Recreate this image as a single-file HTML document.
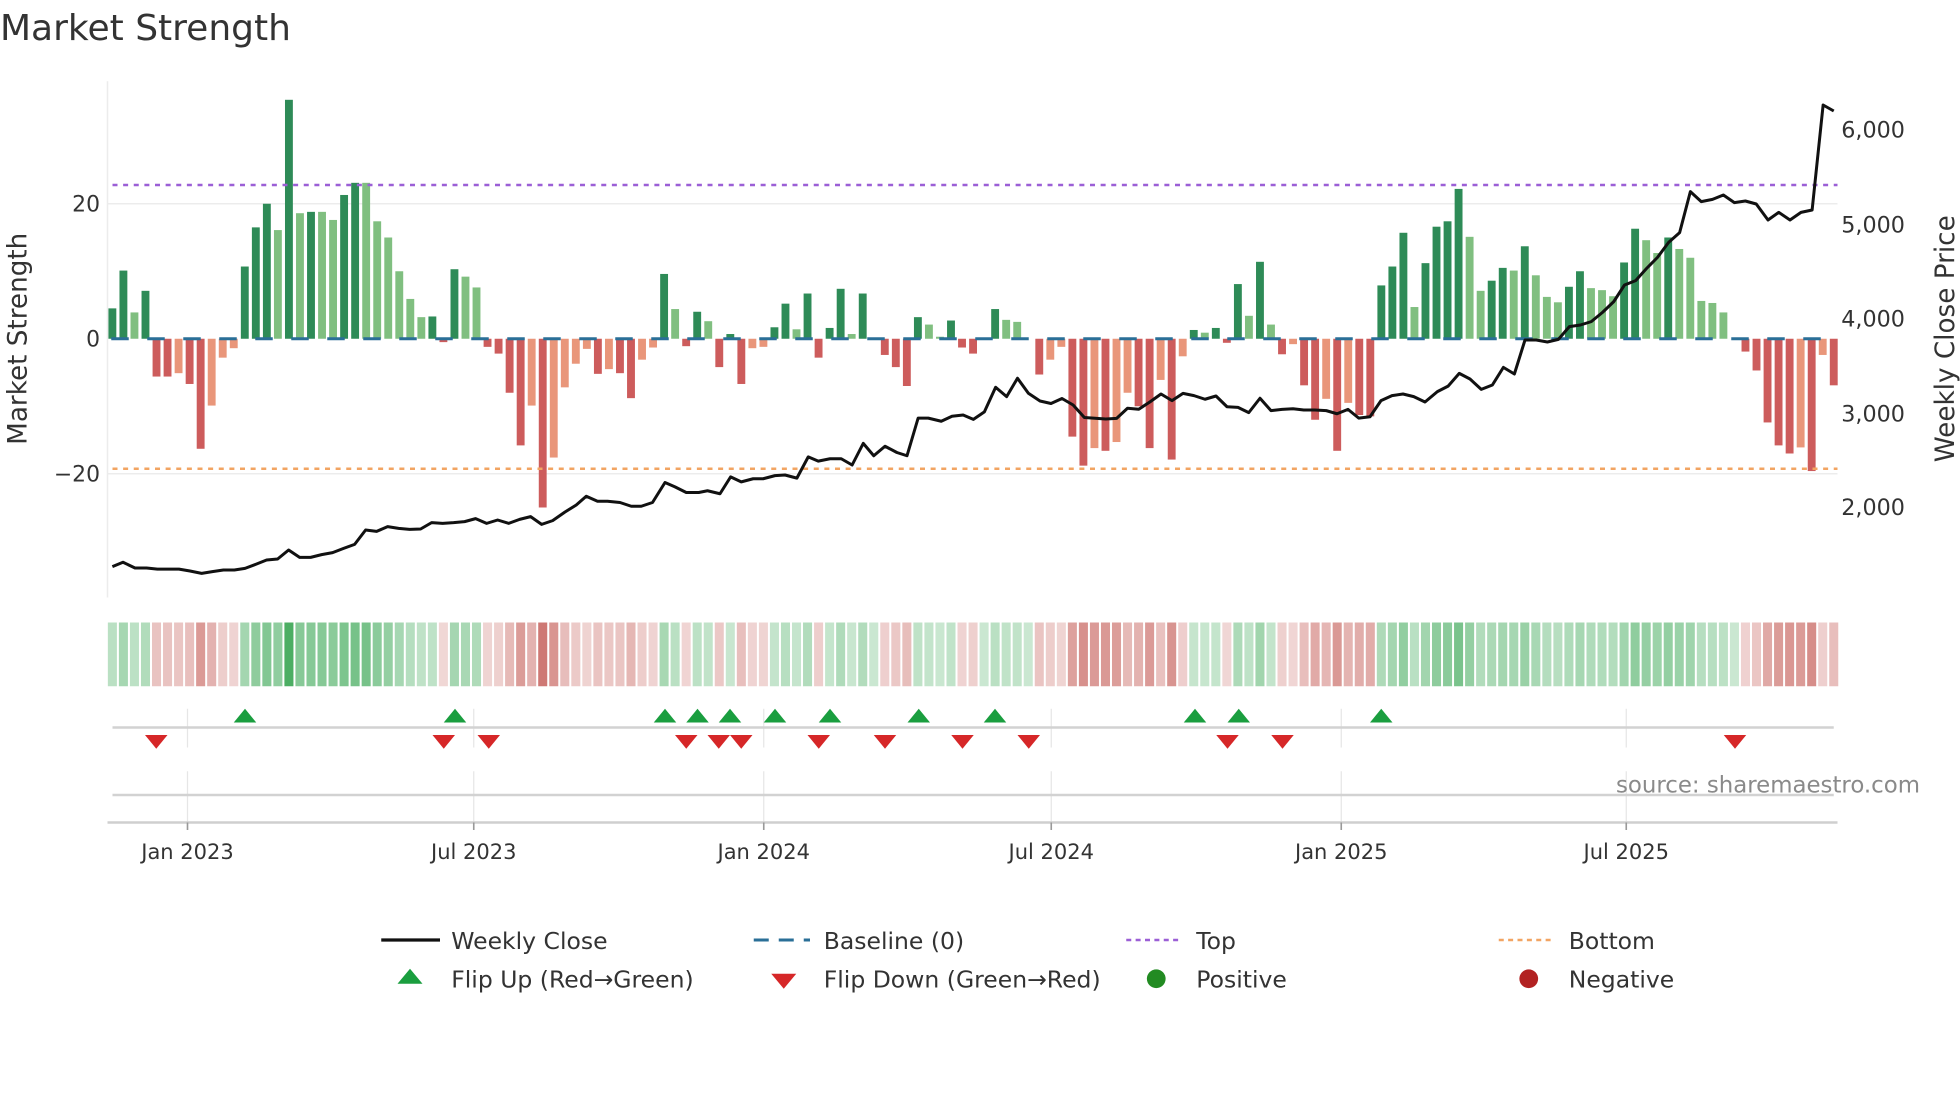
<!DOCTYPE html>
<html><head><meta charset="utf-8"><style>
html,body{margin:0;padding:0;background:#fff;width:1960px;height:1102px;overflow:hidden}
svg{display:block}
text{font-family:"DejaVu Sans","Liberation Sans",sans-serif;fill:#333}
</style></head><body>
<svg id="s" width="1960" height="1102" viewBox="0 0 1568 881.6" xmlns="http://www.w3.org/2000/svg">
<text x="0" y="32" font-size="28.8">Market Strength</text>
<g stroke="#ececec" stroke-width="1.2">
<line x1="86" y1="163" x2="1470" y2="163"/>
<line x1="86" y1="379" x2="1470" y2="379"/>
<line x1="86" y1="65" x2="86" y2="478"/>
</g>
<g id="bars"></g>
<line x1="90" y1="148" x2="1470" y2="148" stroke="#9b5fd6" stroke-width="2" stroke-dasharray="4,4.5"/>
<line x1="90" y1="375" x2="1470" y2="375" stroke="#f2a462" stroke-width="2" stroke-dasharray="4,4.5"/>
<line x1="89" y1="271" x2="1470" y2="271" stroke="#2a6f97" stroke-width="2.4" stroke-dasharray="14,14.8"/>
<polyline id="price" fill="none" stroke="#111" stroke-width="2.4" stroke-linejoin="round"/>
<g font-size="17.5" text-anchor="end">
<text x="80" y="169">20</text><text x="80" y="277">0</text><text x="80" y="385">−20</text>
</g>
<g font-size="17.8">
<text x="1473" y="110">6,000</text><text x="1473" y="186">5,000</text><text x="1473" y="261">4,000</text><text x="1473" y="337">3,000</text><text x="1473" y="412">2,000</text>
</g>
<text transform="translate(21,271) rotate(-90)" font-size="21" text-anchor="middle">Market Strength</text>
<text transform="translate(1563,271) rotate(-90)" font-size="21" text-anchor="middle">Weekly Close Price</text>
<g id="heat"></g>
<g stroke="#e6e6e6" stroke-width="1">
<line x1="150" y1="567" x2="150" y2="598"/><line x1="379" y1="567" x2="379" y2="598"/><line x1="611" y1="567" x2="611" y2="598"/><line x1="841" y1="567" x2="841" y2="598"/><line x1="1073" y1="567" x2="1073" y2="598"/><line x1="1301" y1="567" x2="1301" y2="598"/>
<line x1="150" y1="617" x2="150" y2="658"/><line x1="379" y1="617" x2="379" y2="658"/><line x1="611" y1="617" x2="611" y2="658"/><line x1="841" y1="617" x2="841" y2="658"/><line x1="1073" y1="617" x2="1073" y2="658"/><line x1="1301" y1="617" x2="1301" y2="658"/>
</g>
<line x1="90" y1="582" x2="1467" y2="582" stroke="#d2d2d2" stroke-width="2"/>
<line x1="90" y1="636" x2="1467" y2="636" stroke="#d2d2d2" stroke-width="2"/>
<line x1="86" y1="658" x2="1470" y2="658" stroke="#cfcfcf" stroke-width="2"/>
<g stroke="#999" stroke-width="1.3">
<line x1="150" y1="658" x2="150" y2="664"/><line x1="379" y1="658" x2="379" y2="664"/><line x1="611" y1="658" x2="611" y2="664"/><line x1="841" y1="658" x2="841" y2="664"/><line x1="1073" y1="658" x2="1073" y2="664"/><line x1="1301" y1="658" x2="1301" y2="664"/>
</g>
<g id="flips"></g>
<g font-size="16.8" text-anchor="middle">
<text x="150" y="687">Jan 2023</text><text x="379" y="687">Jul 2023</text><text x="611" y="687">Jan 2024</text><text x="841" y="687">Jul 2024</text><text x="1073" y="687">Jan 2025</text><text x="1301" y="687">Jul 2025</text>
</g>
<text x="1536" y="634" font-size="18.3" text-anchor="end" style="fill:#8a8a8a">source: sharemaestro.com</text>
<g font-size="18.8">
<line x1="305" y1="752" x2="352" y2="752" stroke="#111" stroke-width="2.6"/>
<text x="361" y="759">Weekly Close</text>
<line x1="603" y1="752" x2="648" y2="752" stroke="#2a6f97" stroke-width="2.4" stroke-dasharray="12,8"/>
<text x="659" y="759">Baseline (0)</text>
<line x1="901" y1="752" x2="946" y2="752" stroke="#9b5fd6" stroke-width="2" stroke-dasharray="4,3.5"/>
<text x="957" y="759">Top</text>
<line x1="1199" y1="752" x2="1244" y2="752" stroke="#f2a462" stroke-width="2" stroke-dasharray="4,3.5"/>
<text x="1255" y="759">Bottom</text>
<polygon points="328,775 338,787 318,787" fill="#1a9e3f"/>
<text x="361" y="790">Flip Up (Red→Green)</text>
<polygon points="617,779 637,779 627,791" fill="#d62728"/>
<text x="659" y="790">Flip Down (Green→Red)</text>
<circle cx="925" cy="783" r="7.5" fill="#228b22"/>
<text x="957" y="790">Positive</text>
<circle cx="1223" cy="783" r="7.5" fill="#b22222"/>
<text x="1255" y="790">Negative</text>
</g>
</svg>
<script>
var NS="http://www.w3.org/2000/svg";
var D=[[4.5,'D'],[10.1,'D'],[3.9,'L'],[7.1,'D'],[-5.6,'R'],[-5.6,'R'],[-5.1,'O'],[-6.7,'R'],[-16.3,'R'],[-9.9,'O'],[-2.8,'O'],[-1.4,'O'],[10.7,'D'],[16.5,'D'],[20,'D'],[16.1,'L'],[35.4,'D'],[18.6,'L'],[18.8,'D'],[18.8,'L'],[17.6,'L'],[21.3,'D'],[23.1,'D'],[23.1,'L'],[17.4,'L'],[15,'L'],[10,'L'],[5.9,'L'],[3.2,'L'],[3.3,'D'],[-0.5,'R'],[10.3,'D'],[9.2,'L'],[7.6,'L'],[-1.2,'R'],[-2.2,'R'],[-8,'R'],[-15.8,'R'],[-9.9,'O'],[-25,'R'],
[-17.6,'O'],[-7.2,'O'],[-3.7,'O'],[-1.5,'O'],[-5.2,'R'],[-4.5,'O'],[-5.1,'R'],[-8.8,'R'],[-3.1,'O'],[-1.3,'O'],[9.6,'D'],[4.4,'L'],[-1.1,'R'],[4,'D'],[2.6,'L'],[-4.2,'R'],[0.7,'D'],[-6.7,'R'],[-1.4,'O'],[-1.2,'O'],[1.7,'D'],[5.2,'D'],[1.4,'L'],[6.7,'D'],[-2.8,'R'],[1.6,'D'],[7.4,'D'],[0.7,'L'],[6.7,'D'],[0,'L'],[-2.4,'R'],[-4.2,'R'],[-7,'R'],[3.2,'D'],[2.1,'L'],[0.3,'L'],[2.7,'D'],[-1.3,'R'],[-2.2,'R'],[0,'L'],
[4.4,'D'],[2.8,'L'],[2.5,'L'],[0,'L'],[-5.3,'R'],[-3.1,'O'],[-1.2,'O'],[-14.5,'R'],[-18.8,'R'],[-16.2,'O'],[-16.6,'R'],[-15.3,'O'],[-8,'O'],[-10,'R'],[-16.2,'R'],[-6.1,'O'],[-17.9,'R'],[-2.6,'O'],[1.3,'D'],[0.9,'L'],[1.6,'D'],[-0.6,'R'],[8.1,'D'],[3.4,'L'],[11.4,'D'],[2.1,'L'],[-2.3,'R'],[-0.8,'O'],[-6.9,'R'],[-12,'R'],[-8.9,'O'],[-16.6,'R'],[-9.5,'O'],[-11.3,'R'],[-11.5,'R'],[7.9,'D'],[10.7,'D'],[15.7,'D'],[4.7,'L'],[11.2,'D'],
[16.6,'D'],[17.4,'D'],[22.2,'D'],[15.1,'L'],[7.1,'L'],[8.6,'D'],[10.5,'D'],[10.1,'L'],[13.7,'D'],[9.4,'L'],[6.2,'L'],[5.4,'L'],[7.7,'D'],[10,'D'],[7.5,'L'],[7.2,'L'],[6.3,'L'],[11.3,'D'],[16.3,'D'],[14.6,'L'],[12.7,'L'],[15,'D'],[13.3,'L'],[12,'L'],[5.6,'L'],[5.3,'L'],[3.9,'L'],[0,'L'],[-1.9,'R'],[-4.7,'R'],[-12.4,'R'],[-15.8,'R'],[-17,'R'],[-16.1,'O'],[-19.6,'R'],[-2.4,'O'],[-6.9,'R']];
var col={D:'#2e8b57',L:'#80bf80',R:'#cd5c5c',O:'#e9967a'};
var bars=document.getElementById('bars'),heat=document.getElementById('heat');
var x0=89.9,p=(1467-89.9)/156,bw=6.3;
function mix(c,a){var r=parseInt(c.substr(1,2),16),g=parseInt(c.substr(3,2),16),b=parseInt(c.substr(5,2),16);
return 'rgb('+Math.round(255+(r-255)*a)+','+Math.round(255+(g-255)*a)+','+Math.round(255+(b-255)*a)+')';}
D.forEach(function(d,i){var v=d[0],cx=x0+p*i;
 if(v!==0){var r=document.createElementNS(NS,'rect');var h=Math.abs(v)*5.4;
 r.setAttribute('x',cx-bw/2);r.setAttribute('width',bw);r.setAttribute('y',v>0?271-h:271);r.setAttribute('height',h);r.setAttribute('fill',col[d[1]]);bars.appendChild(r);}
 var c=document.createElementNS(NS,'rect');var f;
 if(v>=0){f=mix('#2ca048',0.25+0.6*Math.min(v/35,1));}else{f=mix('#c0504a',0.22+0.55*Math.min(-v/25,1));}
 c.setAttribute('x',cx-p/2+0.8);c.setAttribute('width',p-1.6);c.setAttribute('y',498);c.setAttribute('height',51);c.setAttribute('fill',f);heat.appendChild(c);
});
var P="89.9,453.3 98.4,449.8 108,454.4 117.3,454.4 125.9,455.3 134.7,455.3 143.2,455.3 152,456.8 161.3,458.7 169.9,457.3 178.7,456 187.5,456 196,454.7 204.5,451.5 213.3,448 222.1,447.2 230.9,440 239.7,445.9 248.5,445.9 257.3,443.7 266.1,442.1 274.9,438.7 283.7,435.5 292.5,424 301.3,425.1 310.1,421.3 318.9,422.7 327.7,423.5 336.5,423.2 345.3,418.1 354.1,418.7 362.9,418.1 371.7,417.3 380.5,414.9 389.3,418.7 398.1,416 406.9,418.7 415.7,415.5 424.5,413.3 433.3,419.5 442.1,416.5 452,409.6 461,404 469,397 478,401 486,401 496,402 505,405 513,405 522,402 532,386 540,389.5 549,394 559,394 566,392.6 576,395 584.5,381.5 593,385.5 602.5,383 610.5,383 620,380.5 628,380 637.5,382.5 646.6,365.5 654.6,368.9 664,367 673,367 681.7,372 690.6,354.7 699,364.6 708,357 717.5,362 725.6,364.6 734.5,334.5 742.6,334.5 753,337 761.6,333 770.5,332 778.7,335.5 787.5,329.5 796.5,309.8 805.3,317.3 814,302.6 822.7,314.6 832,320.8 840.8,322.8 849.6,318.8 858.5,324 867.5,334 876,334.6 884.6,335.2 893.3,334.7 902,326.6 911,327.4 920,321.5 928.8,315.2 937.6,320.5 946.4,314.7 955.2,316.5 964,319.4 972.8,316.8 981.6,325.4 990.4,325.9 999,330.1 1008,318.6 1016.8,328.5 1025.6,327.5 1034.4,327 1043,328 1052,328 1061,328.5 1069.6,331 1078.4,327.5 1087,334.5 1096,333.4 1104.8,320.5 1113.6,316.5 1122.4,315.2 1131,317.3 1140,321.6 1149.9,313.3 1158.5,308.9 1167.4,298.7 1176,303.2 1185,311.5 1193.9,308 1202.7,293.9 1211.5,299.2 1220,272 1229,272 1237.9,273.6 1246.7,271.5 1255.5,261.3 1264.3,260 1273,257.3 1282,249.9 1291,241.3 1299.6,228 1308.5,224.5 1317.3,214.7 1326,205.9 1334.9,193.9 1343.7,186.1 1352.3,153.3 1361,161.3 1370,159.5 1378.7,156 1387.5,162.1 1396.3,160.8 1405,163.2 1414.4,176 1423,169.9 1432,176 1440.8,169.9 1449.7,168 1458.5,84 1467,88.8";
document.getElementById('price').setAttribute('points',P);
var fl=document.getElementById('flips');
[196,364,532,558,584,620,664,735,796,956,991,1105].forEach(function(x){var t=document.createElementNS(NS,'polygon');
t.setAttribute('points',(x)+',567 '+(x+9)+',578 '+(x-9)+',578');t.setAttribute('fill','#1a9e3f');fl.appendChild(t);});
[125,355,391,549,575,593,655,708,770,823,982,1026,1388].forEach(function(x){var t=document.createElementNS(NS,'polygon');
t.setAttribute('points',(x-9)+',588 '+(x+9)+',588 '+x+',599');t.setAttribute('fill','#d62728');fl.appendChild(t);});
</script>
</body></html>
